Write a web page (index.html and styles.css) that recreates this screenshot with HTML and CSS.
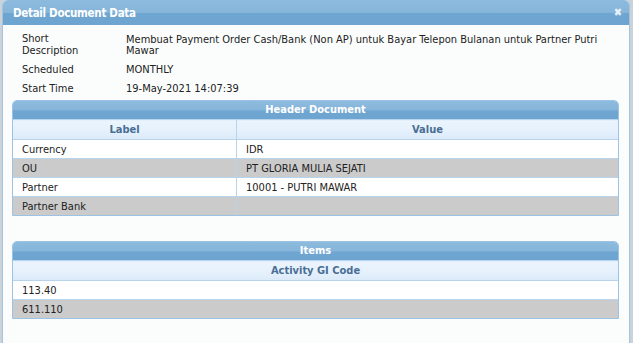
FILE: index.html
```html
<!DOCTYPE html>
<html>
<head>
<meta charset="utf-8">
<link rel="stylesheet" href="styles.css">
</head>
<body>
<div class="dialog">
  <div class="titlebar">
    <span class="title">Detail Document Data</span>
    <span class="close">&#x2716;</span>
  </div>
  <div class="content">
    <div class="info">
      <div class="info-row"><div class="info-label">Short<br>Description</div><div class="info-value">Membuat Payment Order Cash/Bank (Non AP) untuk Bayar Telepon Bulanan untuk Partner Putri Mawar</div></div>
      <div class="info-row"><div class="info-label">Scheduled</div><div class="info-value">MONTHLY</div></div>
      <div class="info-row"><div class="info-label">Start Time</div><div class="info-value">19-May-2021 14:07:39</div></div>
    </div>

    <div class="grid">
      <div class="grid-title">Header Document</div>
      <table class="grid-table">
        <thead>
          <tr><th class="col-label">Label</th><th>Value</th></tr>
        </thead>
        <tbody>
          <tr><td>Currency</td><td>IDR</td></tr>
          <tr class="alt"><td>OU</td><td>PT GLORIA MULIA SEJATI</td></tr>
          <tr><td>Partner</td><td>10001 - PUTRI MAWAR</td></tr>
          <tr class="alt"><td>Partner Bank</td><td></td></tr>
        </tbody>
      </table>
    </div>

    <div class="grid items">
      <div class="grid-title">Items</div>
      <table class="grid-table">
        <thead>
          <tr><th>Activity GI Code</th></tr>
        </thead>
        <tbody>
          <tr><td>113.40</td></tr>
          <tr class="alt"><td>611.110</td></tr>
        </tbody>
      </table>
    </div>
  </div>
</div>
</body>
</html>
```

FILE: styles.css
```css
html, body {
  margin: 0;
  padding: 0;
  height: 100%;
}
body {
  background: #c9d3dc;
  font-family: "DejaVu Sans Condensed", "DejaVu Sans", sans-serif;
  font-size: 11px;
  color: #222;
  padding-left: 2px;
  overflow: hidden;
}
.dialog {
  width: 628px;
  height: 343px;
  background: #fbfdfd;
  border-left: 1px solid #a9c2d8;
  border-right: 1px solid #a9c2d8;
  border-radius: 5px 5px 0 0;
  box-sizing: border-box;
}
.titlebar {
  height: 25px;
  display: flex;
  align-items: center;
  justify-content: space-between;
  padding: 0 7px 0 10px;
  border-radius: 5px 5px 0 0;
  background: linear-gradient(to bottom, #8dbbde 0%, #86b5da 50%, #6fa6d1 52%, #6ea5d0 100%);
  color: #fff;
}
.title {
  font-weight: bold;
  font-size: 11.5px;
  letter-spacing: -0.3px;
}
.close {
  font-size: 11px;
  font-weight: bold;
  color: #e8f1f9;
}
.content {
  padding: 5px 10px 0 9px;
}
.info {
  padding-left: 10px;
}
.info-row {
  display: flex;
  padding: 3px 0 4px;
  line-height: 12px;
}
.info-label {
  width: 104px;
  flex: none;
}
.info-value {
  flex: 1;
  padding-right: 0;
}
.info-row:first-child .info-value {
  line-height: 11px;
  padding-top: 1px;
}
.grid {
  margin-top: 1px;
  border: 1px solid #9dc3e4;
  border-radius: 5px 5px 0 0;
  overflow: hidden;
}
.grid.items {
  margin-top: 25px;
}
.grid-title {
  height: 18px;
  line-height: 18px;
  text-align: center;
  font-weight: bold;
  color: #fff;
  background: linear-gradient(to bottom, #8dbbde 0%, #86b5da 50%, #6fa6d1 55%, #6ea5d0 100%);
}
.grid-table {
  width: 100%;
  border-collapse: collapse;
}
.grid-table th {
  height: 19px;
  padding: 0;
  font-weight: bold;
  color: #4a6e94;
  background: linear-gradient(to bottom, #ebf4fd 0%, #e6f1fc 50%, #dbeaf9 100%);
  border-top: 1px solid #b8d4ec;
  border-bottom: 1px solid #b8d4ec;
  text-align: center;
}
.grid-table th + th {
  border-left: 1px solid #b8d4ec;
}
.grid-table .col-label {
  width: 223px;
}
.grid-table td {
  height: 17px;
  padding: 1px 0 0 9px;
  background: #fff;
  border-bottom: 1px solid #b8d4ec;
}
.grid-table td + td {
  border-left: 1px solid #b8d4ec;
}
.grid-table tr.alt td {
  background: #cbcbcb;
}
.grid-table tr:last-child td {
  border-bottom: none;
}
```
